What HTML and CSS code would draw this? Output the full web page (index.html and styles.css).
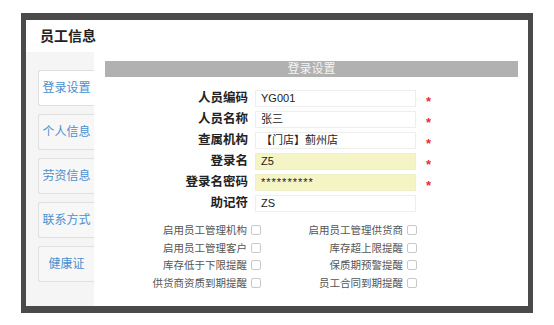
FILE: index.html
```html
<!DOCTYPE html>
<html lang="zh-CN">
<head>
    <meta charset="UTF-8">
    <title>员工信息</title>
    <link rel="stylesheet" href="styles.css">
</head>
<body>
    <div class="frame">
        <div class="title">员工信息</div>
        <div class="content">
            <div class="sidebar">
                <div class="tab active">登录设置</div>
                <div class="tab">个人信息</div>
                <div class="tab">劳资信息</div>
                <div class="tab">联系方式</div>
                <div class="tab">健康证</div>
            </div>
            <div class="main">
                <div class="section-head">登录设置</div>

                <div class="form">
                    <label class="label">人员编码</label>
                    <div class="input">YG001</div>
                    <span class="star">*</span>

                    <label class="label">人员名称</label>
                    <div class="input">张三</div>
                    <span class="star">*</span>

                    <label class="label">查属机构</label>
                    <div class="input">【门店】蓟州店</div>
                    <span class="star">*</span>

                    <label class="label">登录名</label>
                    <div class="input yellow">Z5</div>
                    <span class="star">*</span>

                    <label class="label">登录名密码</label>
                    <div class="input yellow pwd">**********</div>
                    <span class="star">*</span>

                    <label class="label">助记符</label>
                    <div class="input">ZS</div>
                    <span></span>
                </div>

                <div class="checks">
                    <div class="check">启用员工管理机构<span class="box"></span></div>
                    <div class="check">启用员工管理供货商<span class="box"></span></div>
                    <div class="check">启用员工管理客户<span class="box"></span></div>
                    <div class="check">库存超上限提醒<span class="box"></span></div>
                    <div class="check">库存低于下限提醒<span class="box"></span></div>
                    <div class="check">保质期预警提醒<span class="box"></span></div>
                    <div class="check">供货商资质到期提醒<span class="box"></span></div>
                    <div class="check">员工合同到期提醒<span class="box"></span></div>
                </div>
            </div>
        </div>
    </div>
</body>
</html>
```

FILE: styles.css
```css
* {
    margin: 0;
    padding: 0;
    box-sizing: border-box;
    font-family: 'Liberation Sans', 'Noto Sans CJK SC', sans-serif;
}

body {
    background: #fff;
}

.frame {
    margin: 13px 0 0 21px;
    width: 512px;
    height: 300px;
    border: 5px solid #4a4a4a;
    border-top-width: 7px;
    border-bottom-width: 7px;
    background: #fff;
    display: flex;
    flex-direction: column;
    overflow: hidden;
}

.title {
    height: 32px;
    padding-left: 14px;
    font-size: 14px;
    font-weight: 700;
    line-height: 32px;
    color: #222;
}

.content {
    flex: 1;
    display: flex;
}

.sidebar {
    width: 68px;
    background: #f5f5f5;
    padding: 18px 0 0 12px;
    display: flex;
    flex-direction: column;
    gap: 8px;
}

.tab {
    height: 36px;
    border: 1px solid #e0e0e0;
    border-right: none;
    border-radius: 3px 0 0 3px;
    background: #f7f7f7;
    color: #4a90d0;
    font-size: 12px;
    line-height: 34px;
    text-align: center;
}

.tab.active {
    background: #fff;
}

.main {
    flex: 1;
    padding: 9px 10px 0 11px;
}

.section-head {
    height: 16px;
    background: #b1b1b1;
    color: #f4f4f4;
    font-size: 12px;
    line-height: 16px;
    text-align: center;
}

.form {
    margin-top: 13px;
    display: grid;
    grid-template-columns: 143px 161px 20px;
    grid-auto-rows: 17px;
    column-gap: 7px;
    row-gap: 4px;
    align-items: center;
}

.label {
    text-align: right;
    font-size: 12.5px;
    font-weight: 700;
    color: #222;
    line-height: 17px;
    height: 17px;
}

.input {
    height: 17px;
    border: 1px solid #eee;
    background: #fff;
    font-size: 11px;
    line-height: 15px;
    padding-left: 5px;
    color: #222;
    overflow: hidden;
}

.input.yellow {
    background: #f4f4c4;
    border-color: #f0f0c8;
}

.input.pwd {
    letter-spacing: 1px;
}

.star {
    color: #e53030;
    font-size: 13px;
    font-weight: 700;
    line-height: 17px;
    height: 17px;
    padding-left: 3px;
    position: relative;
    top: 3px;
}

.checks {
    margin-top: 9px;
    display: grid;
    grid-template-columns: 156px 156px;
    grid-auto-rows: 17.7px;
}

.check {
    display: flex;
    justify-content: flex-end;
    align-items: center;
    gap: 4px;
    font-size: 10.5px;
    line-height: 14px;
    color: #555;
}

.box {
    width: 10px;
    height: 10px;
    border: 1px solid #c8c8c8;
    border-radius: 2px;
    background: #fff;
}
```
